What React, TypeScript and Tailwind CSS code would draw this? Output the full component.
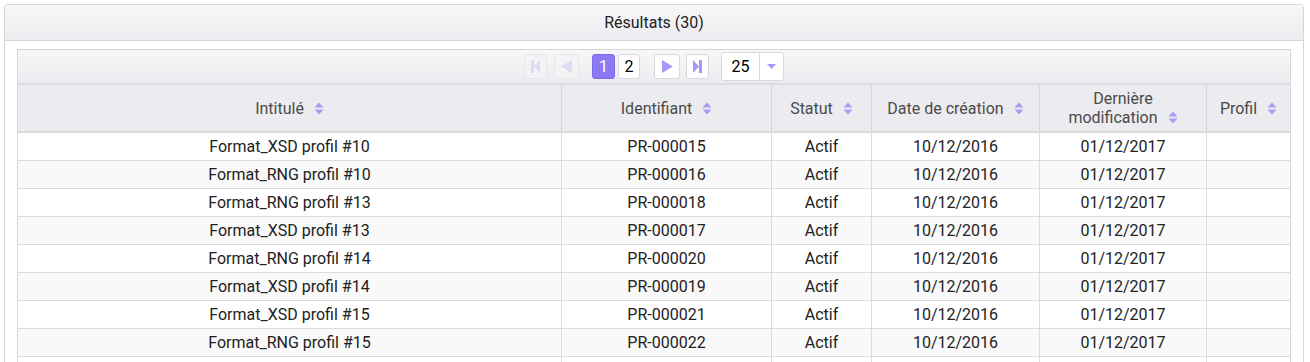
const rows = [
  ["Format_XSD profil #10", "PR-000015"],
  ["Format_RNG profil #10", "PR-000016"],
  ["Format_RNG profil #13", "PR-000018"],
  ["Format_XSD profil #13", "PR-000017"],
  ["Format_RNG profil #14", "PR-000020"],
  ["Format_XSD profil #14", "PR-000019"],
  ["Format_XSD profil #15", "PR-000021"],
  ["Format_RNG profil #15", "PR-000022"],
];

const cols = [
  { label: "Intitulé", w: "w-[544px]" },
  { label: "Identifiant", w: "w-[210px]" },
  { label: "Statut", w: "w-[100px]" },
  { label: "Date de création", w: "w-[168px]" },
  { label: "Dernière modification", w: "w-[167px]" },
  { label: "Profil", w: "flex-1" },
];

function SortIcon() {
  return (
    <svg width="10" height="13" viewBox="0 0 10 13" className="ml-[10px] shrink-0">
      <path d="M5 0.5 L9.5 5.5 H0.5 Z" fill="#a99df3" />
      <path d="M5 12.5 L9.5 7.5 H0.5 Z" fill="#a99df3" />
    </svg>
  );
}

function PagerButton({
  children,
  disabled,
  w,
}: {
  children: React.ReactNode;
  disabled?: boolean;
  w: string;
}) {
  return (
    <div
      className={
        w +
        " h-[25px] flex items-center justify-center rounded-[3px] border " +
        (disabled ? "border-[#e8e8ec] bg-[#f3f3f6]" : "border-[#d8d8de] bg-white")
      }
    >
      {children}
    </div>
  );
}

export default function App() {
  const iconOn = "#a797f6";
  const iconOff = "#dedaf7";
  return (
    <div className="w-[1310px] h-[362px] overflow-hidden bg-white pl-[4px] pt-[4px] pr-[6px] font-['Roboto',sans-serif] text-[16px] text-[#222]">
      <div className="border border-[#d6d6d9] rounded-t-[3px] h-[420px]">
        <div className="h-[36px] flex items-center justify-center bg-gradient-to-b from-[#f7f7f9] to-[#ececf0] border-b border-[#d6d6d9] text-[#222]">
          Résultats (30)
        </div>
        <div className="pt-[8px] pl-[12px] pr-[12px]">
          <div className="border border-[#d6d6d9]">
            <div className="h-[35px] flex items-center justify-center bg-gradient-to-b from-[#f7f7f9] to-[#ececf0] border-b-2 border-[#dcdce0]">
              <div className="flex items-center">
                <PagerButton disabled w="w-[23px]">
                  <svg width="9" height="13" viewBox="0 0 9 13">
                    <rect x="0" y="0" width="3" height="13" fill={iconOff} />
                    <path d="M9 0 V13 L3 6.5 Z" fill={iconOff} />
                  </svg>
                </PagerButton>
                <div className="w-[7px]" />
                <PagerButton disabled w="w-[25px]">
                  <svg width="13" height="13" viewBox="0 0 13 13">
                    <path d="M12 0 V13 L1 6.5 Z" fill={iconOff} />
                  </svg>
                </PagerButton>
                <div className="w-[13px]" />
                <div className="w-[23px] h-[25px] rounded-[3px] bg-[#8b79f6] border border-[#7c6ae8] text-white flex items-center justify-center">
                  1
                </div>
                <div className="w-[3px]" />
                <div className="w-[22px] h-[25px] rounded-[3px] bg-white border border-[#d8d8de] text-black flex items-center justify-center">
                  2
                </div>
                <div className="w-[14px]" />
                <PagerButton w="w-[26px]">
                  <svg width="13" height="13" viewBox="0 0 13 13">
                    <path d="M1 0 V13 L12 6.5 Z" fill={iconOn} />
                  </svg>
                </PagerButton>
                <div className="w-[6px]" />
                <PagerButton w="w-[23px]">
                  <svg width="9" height="13" viewBox="0 0 9 13">
                    <path d="M0 0 V13 L6 6.5 Z" fill={iconOn} />
                    <rect x="6" y="0" width="3" height="13" fill={iconOn} />
                  </svg>
                </PagerButton>
                <div className="w-[12px]" />
                <div className="w-[63px] h-[29px] rounded-[3px] bg-white border border-[#d8d8de] flex items-stretch">
                  <div className="flex-1 flex items-center justify-center text-[16px] text-black border-r border-[#d8d8de]">
                    25
                  </div>
                  <div className="w-[23px] flex items-center justify-center">
                    <svg width="9" height="5" viewBox="0 0 9 5">
                      <path d="M0 0 H9 L4.5 5 Z" fill={iconOn} />
                    </svg>
                  </div>
                </div>
              </div>
            </div>
            <div className="flex h-[48px] bg-[#ececf0] border-b-2 border-[#dcdce0] text-[#4a4a4a]">
              {cols.map((c, i) => (
                <div
                  key={c.label}
                  className={
                    c.w +
                    " flex items-center justify-center px-2 text-center leading-[19px] " +
                    (i < cols.length - 1 ? "border-r border-[#d6d6d9]" : "")
                  }
                >
                  {c.label === "Dernière modification" ? (
                    <div className="flex flex-col items-center">
                      <span>Dernière</span>
                      <span className="flex items-center">
                        modification
                        <SortIcon />
                      </span>
                    </div>
                  ) : (
                    <>
                      <span>{c.label}</span>
                      <SortIcon />
                    </>
                  )}
                </div>
              ))}
            </div>
            {rows.map((r, ri) => (
              <div
                key={r[1]}
                className={
                  "flex h-[28px] border-b border-[#dcdcdc] " +
                  (ri % 2 === 1 ? "bg-[#f9f9f9]" : "bg-white")
                }
              >
                {[r[0], r[1], "Actif", "10/12/2016", "01/12/2017", ""].map((v, i) => (
                  <div
                    key={i}
                    className={
                      cols[i].w +
                      " flex items-center justify-center " +
                      (i < cols.length - 1 ? "border-r border-[#dcdcdc]" : "")
                    }
                  >
                    {v}
                  </div>
                ))}
              </div>
            ))}
            {/* next row, below the fold */}
            <div className="flex h-[28px] bg-white">
              {cols.map((c, i) => (
                <div
                  key={i}
                  className={
                    c.w + " " + (i < cols.length - 1 ? "border-r border-[#dcdcdc]" : "")
                  }
                />
              ))}
            </div>
          </div>
        </div>
      </div>
    </div>
  );
}
